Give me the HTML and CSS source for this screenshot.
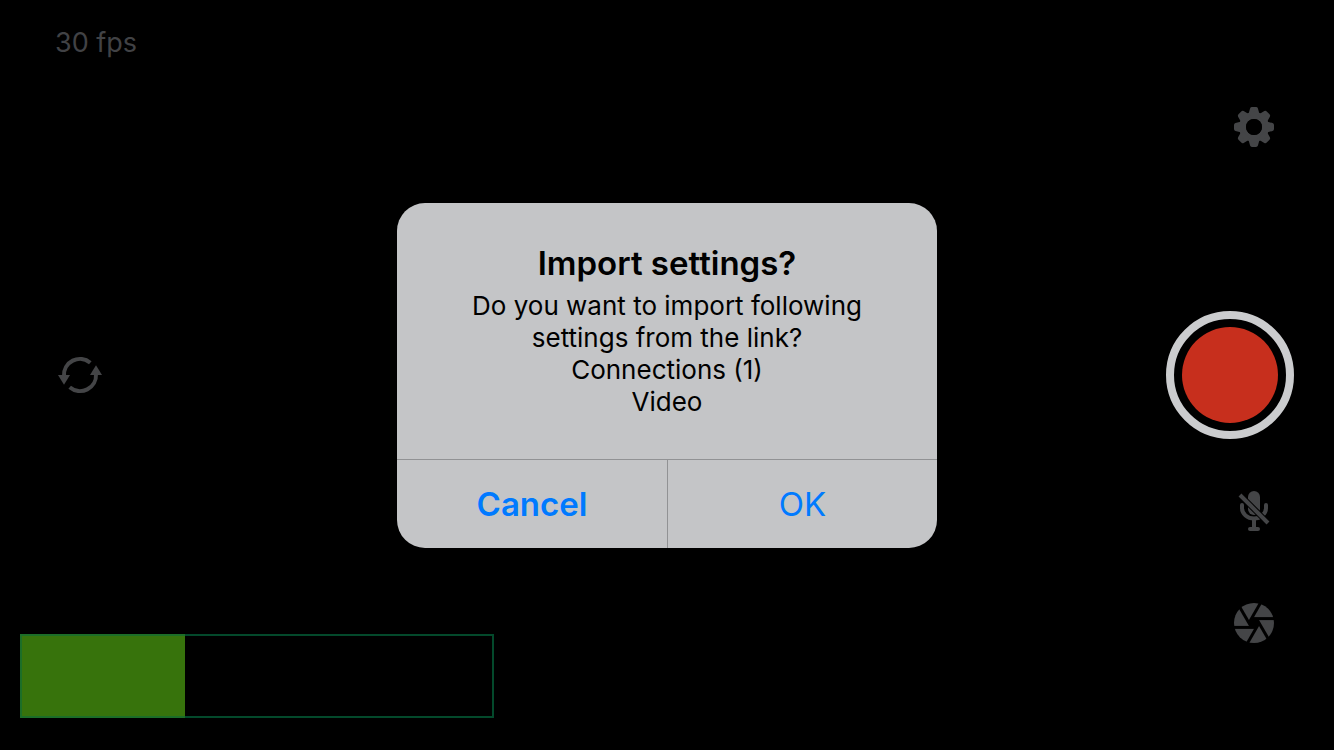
FILE: index.html
```html
<!DOCTYPE html>
<html lang="en">
	<head>
		<meta charset="utf-8" />
		<title>Camera</title>
		<link rel="stylesheet" href="styles.css">
	</head>
	<body>
		<main class="camera">
			<div class="left">
				<p class="fps">30 fps</p>
				<button class="icon-button switch" type="button" aria-label="Switch camera">
					<svg width="44" height="40" viewBox="-22 -20 44 40">
						<g fill="none" stroke="#444547" stroke-width="4">
							<path d="M-16 1A16 16 0 0 1 10.3 -12.3"/>
							<path d="M16 -1A16 16 0 0 1 -10.3 12.3"/>
						</g>
						<g fill="#444547">
							<path d="M-22 0H-10L-16 9.7Z"/>
							<path d="M22 0H10L16 -9.7Z"/>
						</g>
					</svg>
				</button>
				<div class="meter" role="meter" aria-label="Audio level" aria-valuenow="35" aria-valuemin="0" aria-valuemax="100">
					<div class="meter-fill" style="width: 35%"></div>
				</div>
			</div>
			<div class="right">
				<div class="tools tools-top">
					<button class="icon-button" type="button" aria-label="Settings">
						<svg width="40" height="40" viewBox="-20 -20 40 40">
							<defs>
								<path id="tooth" d="M-2 -18H2L3.4 -13H-3.4Z" stroke-width="4" stroke-linejoin="round"/>
							</defs>
							<g fill="#444547" stroke="#444547">
								<circle r="11.5" fill="none" stroke-width="7"/>
								<use href="#tooth"/>
								<use href="#tooth" transform="rotate(45)"/>
								<use href="#tooth" transform="rotate(90)"/>
								<use href="#tooth" transform="rotate(135)"/>
								<use href="#tooth" transform="rotate(180)"/>
								<use href="#tooth" transform="rotate(225)"/>
								<use href="#tooth" transform="rotate(270)"/>
								<use href="#tooth" transform="rotate(315)"/>
							</g>
							<circle r="8"/>
						</svg>
					</button>
				</div>
				<button class="record" type="button" aria-label="Record"></button>
				<div class="tools tools-bottom">
					<button class="icon-button" type="button" aria-label="Unmute microphone">
						<svg width="40" height="40" viewBox="-20 -20 40 40">
							<rect x="-6" y="-20" width="12" height="24" rx="6" fill="#444547"/>
							<g fill="none" stroke="#444547" stroke-width="4" stroke-linecap="round">
								<path d="M-12 -6V-3A12 10.5 0 0 0 12 -3V-6"/>
								<path d="M0 8V17.8M-4 18H4"/>
							</g>
							<path d="M-16 -18L16 14" stroke="#000" stroke-width="6"/>
							<path d="M-14 -16L14 12" stroke="#444547" stroke-width="4"/>
						</svg>
					</button>
					<button class="icon-button" type="button" aria-label="Exposure">
						<svg width="40" height="40" viewBox="-20 -20 40 40">
							<defs>
								<path id="slit" d="M-2.5 -4.4H21"/>
							</defs>
							<circle r="20" fill="#444547"/>
							<path d="M-5 0L-2.5 -4.4H2.5L5 0L2.5 4.4H-2.5Z"/>
							<g stroke="#000" stroke-width="3">
								<use href="#slit"/>
								<use href="#slit" transform="rotate(60)"/>
								<use href="#slit" transform="rotate(120)"/>
								<use href="#slit" transform="rotate(180)"/>
								<use href="#slit" transform="rotate(240)"/>
								<use href="#slit" transform="rotate(300)"/>
							</g>
						</svg>
					</button>
				</div>
			</div>
		</main>

		<div class="overlay">
			<div class="alert" role="alertdialog" aria-labelledby="alertTitle" aria-describedby="alertText">
				<div class="alert-body">
					<h2 id="alertTitle">Import settings?</h2>
					<p id="alertText">Do you want to import following<br>settings from the link?<br>Connections (1)<br>Video</p>
				</div>
				<div class="alert-actions">
					<button class="alert-cancel" type="button">Cancel</button>
					<button type="button">OK</button>
				</div>
			</div>
		</div>
	</body>
</html>
```

FILE: styles.css
```css
* { box-sizing: border-box; }
body { margin: 0; background-color: #000; font-family: Inter, "Liberation Sans", sans-serif; }
button { border: none; background: none; padding: 0; font-family: inherit; cursor: pointer; }

/* camera screen */
.camera {
	display: grid;
	grid-template-columns: 1fr auto;
	min-height: 100vh;
}
.left, .right { display: grid; grid-template-rows: 1fr auto 1fr; }
.left { padding-left: 20px; }
.right { justify-items: end; padding-right: 40px; }
.fps { margin: 0; padding: 26px 35px; color: #414245; font-size: 27px; line-height: 34px; }
.icon-button { display: block; }
.icon-button svg { display: block; }
.switch { justify-self: start; margin-left: 38px; }
.meter {
	align-self: end;
	width: 474px;
	max-width: 100%;
	height: 84px;
	margin-bottom: 32px;
	border: 2px solid #03492b;
}
.meter-fill {
	height: 84px;
	margin: -2px;
	background-color: #37730c;
	border: 2px solid #1c6e28;
	border-right: none;
}
.tools { display: flex; flex-direction: column; margin-right: 20px; }
.tools-top { padding-top: 107px; }
.tools-bottom { padding-top: 52px; gap: 72px; }
.record {
	width: 128px;
	height: 128px;
	padding: 8px;
	border: 8px solid #cbccce;
	border-radius: 50%;
	background: #c72f1d content-box;
}

/* alert */
.overlay {
	position: absolute;
	inset: 0;
	display: flex;
	align-items: center;
	justify-content: center;
}
.alert {
	width: 540px;
	max-width: 90%;
	background-color: #c4c5c7;
	border-radius: 28px;
	overflow: hidden;
	text-align: center;
	color: #000;
}
.alert-body { padding: 39px 32px 41px; }
.alert h2 { margin: 0 0 6px; font-size: 33px; line-height: 42px; font-weight: 600; }
.alert p { margin: 0; font-size: 26px; line-height: 32px; }
.alert-actions { display: grid; grid-template-columns: 1fr 1fr; border-top: 1px solid #919294; }
.alert-actions button { height: 88px; color: #007aff; font-size: 33px; }
.alert-actions button + button { border-left: 1px solid #919294; }
.alert-actions .alert-cancel { font-weight: 600; }
```
